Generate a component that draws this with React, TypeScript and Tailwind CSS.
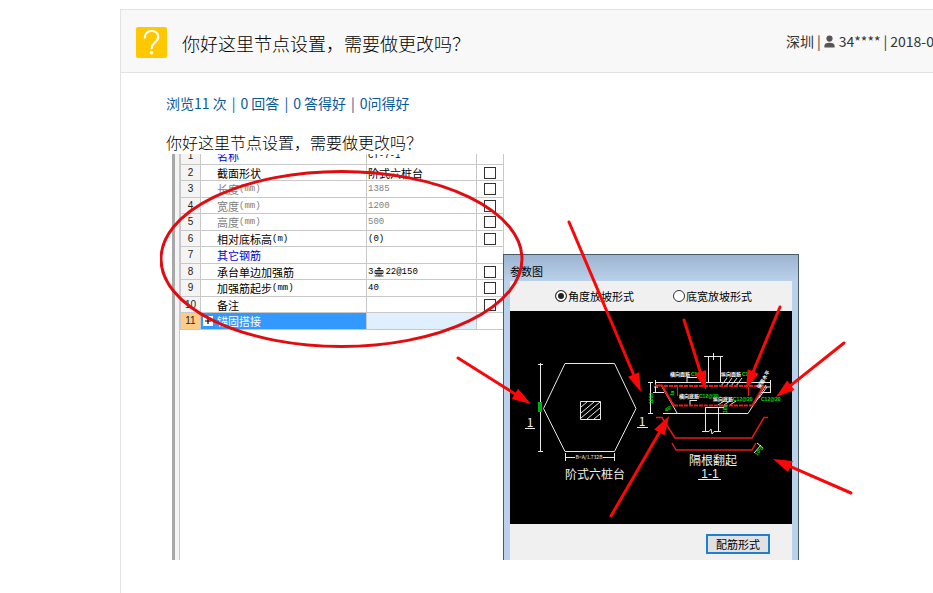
type Row = {
    no: number;
    name: string;
    unit?: string;
    value?: string;
    cjkValue?: boolean;
    rebar?: boolean;
    tone?: "blue" | "gray";
    check?: boolean;
    selected?: boolean;
};

const rows: Row[] = [
    { no: 1, name: "名称", value: "CT-7-1", tone: "blue" },
    { no: 2, name: "截面形状", value: "阶式六桩台", cjkValue: true, check: true },
    { no: 3, name: "长度", unit: "(mm)", value: "1385", tone: "gray", check: true },
    { no: 4, name: "宽度", unit: "(mm)", value: "1200", tone: "gray", check: true },
    { no: 5, name: "高度", unit: "(mm)", value: "500", tone: "gray", check: true },
    { no: 6, name: "相对底标高", unit: "(m)", value: "(0)", check: true },
    { no: 7, name: "其它钢筋", tone: "blue" },
    { no: 8, name: "承台单边加强筋", value: "22@150", rebar: true, check: true },
    { no: 9, name: "加强筋起步", unit: "(mm)", value: "40", check: true },
    { no: 10, name: "备注", check: true },
    { no: 11, name: "锚固搭接", selected: true },
];

const stats = ["浏览11 次", "0 回答", "0 答得好", "0问得好"];

// tail x, tail y, tip x, tip y
const arrows = [
    [569, 222, 641, 392],
    [684, 320, 706, 390],
    [780, 307, 746, 389],
    [844, 343, 776, 397],
    [851, 493, 773, 459],
    [611, 516, 669, 416],
    [458, 358, 531, 404],
];

function QuestionIcon() {
    return (
        <svg viewBox="0 0 31 31" className="mt-[2px] size-[31px] shrink-0" aria-hidden="true">
            <rect width="31" height="31" rx="2" fill="#ffc800" />
            <path
                d="M8.8 10.6C8.8 6.4 11.6 4 15.6 4c4 0 6.6 2.3 6.6 5.8 0 2.8-1.6 4.3-3.5 6-2.2 1.9-3.1 3-3.1 5.4"
                fill="none"
                stroke="#fff"
                strokeWidth="2.2"
                strokeLinecap="round"
            />
            <circle cx="15.5" cy="25.8" r="1.8" fill="#fff" />
        </svg>
    );
}

function UserIcon() {
    return (
        <svg viewBox="0 0 11 13" className="mt-px mr-px h-[13px] w-[11px] shrink-0" fill="#555" aria-hidden="true">
            <circle cx="5.5" cy="3.6" r="3.1" />
            <path d="M0.4 12.6V10.8C0.4 8.8 2.2 7.8 5.5 7.8s5.1 1 5.1 3v1.8z" />
        </svg>
    );
}

function RebarIcon() {
    return (
        <svg viewBox="0 0 10 10" className="mx-px size-[10px]" fill="none" stroke="#000" strokeWidth="0.8" aria-hidden="true">
            <path d="M5 0v9.5M0.5 9h9M3 1.5h4M1 3.5h8v3h-8zM3 3.5v5M7 3.5v5" />
        </svg>
    );
}

function PropertyTable() {
    return (
        <table className="-mt-[7px] w-full table-fixed border-collapse text-[11px] leading-[14px] text-black">
            <colgroup>
                <col className="w-[20px]" />
                <col className="w-[166px]" />
                <col className="w-[110px]" />
                <col className="w-[27px]" />
            </colgroup>
            <tbody>
                {rows.map((row) => (
                    <tr
                        key={row.no}
                        className={`odd:h-[17px] even:h-[16px] ${
                            row.tone === "blue" ? "text-[#0000e0]" : row.tone === "gray" ? "text-[#808080]" : ""
                        }`}
                    >
                        <td
                            className={`border border-[#c8c8c8] p-0 text-center font-['Liberation_Sans'] text-[10px] leading-[14px] text-[#222] ${
                                row.selected ? "bg-[#ffcc88]" : "bg-[#f4f4f4]"
                            }`}
                        >
                            {row.no}
                        </td>
                        <td
                            className={`border border-[#c8c8c8] p-0 whitespace-nowrap ${
                                row.selected ? "bg-[#3399ff] text-white" : ""
                            }`}
                        >
                            <div className="flex h-[14px] items-center">
                                <span className="flex w-[16px] shrink-0 items-center pl-[2px]">
                                    {row.selected && (
                                        <svg viewBox="0 0 10 10" className="size-[10px]" aria-label="展开">
                                            <rect width="10" height="10" fill="#fff" />
                                            <path d="M5 2v6M2 5h6" stroke="#000" strokeWidth="1.2" />
                                        </svg>
                                    )}
                                </span>
                                {row.name}
                                {row.unit && <span className="font-['Liberation_Mono'] text-[9px]">{row.unit}</span>}
                            </div>
                        </td>
                        <td className={`border border-[#c8c8c8] p-0 whitespace-nowrap ${row.selected ? "bg-[#e0effe]" : ""}`}>
                            <div
                                className={`flex h-[14px] items-center pl-px ${
                                    row.cjkValue ? "" : "font-['Liberation_Mono'] text-[9px]"
                                } ${row.tone === "blue" ? "text-black" : ""}`}
                            >
                                {row.rebar && (
                                    <>
                                        3<RebarIcon />
                                    </>
                                )}
                                {row.value}
                            </div>
                        </td>
                        <td className="border border-[#c8c8c8] p-0">
                            {row.check && (
                                <input
                                    type="checkbox"
                                    aria-label={row.name}
                                    className="mx-auto block size-[12px] appearance-none border border-[#333] bg-white"
                                />
                            )}
                        </td>
                    </tr>
                ))}
            </tbody>
        </table>
    );
}

function CadDrawing() {
    return (
        <svg viewBox="510 311 282 213" className="block h-[213px] w-full bg-black font-['Noto_Sans_CJK_SC',sans-serif]">
            {/* plan */}
            <g fill="none" stroke="#e8e8e8">
                <path d="M565 363.5H614.5L636 408.5L614.5 451.5H565L543.5 408.5Z" />
                <path d="M540.5 363V452M538 364.5H543M538 451.5H543" />
                <path d="M580.5 401.5H600.5V419.5H580.5Z" />
                <path d="M581 407L587 402M581 413L594 402M581 418L600 402M587 419L600 408M594 419L600 414" />
                <path d="M525 428.5H535M637 427.5H648" />
                <path d="M565.5 453V461M614.5 453V461M565 457.5H575M603 457.5H614" />
            </g>
            <rect x="538" y="402" width="4" height="10" fill="#00b010" />
            <g fill="#f0f0f0" textAnchor="middle">
                <text x="530" y="427" fontSize="12">1</text>
                <text x="642" y="426" fontSize="12">1</text>
                <text x="589" y="459" fontSize="5">B=A/1.732B</text>
                <text x="595" y="479" fontSize="12">阶式六桩台</text>
                <text x="713" y="465" fontSize="12">隔根翻起</text>
                <text x="710" y="478" fontSize="12" className="font-['Liberation_Sans']">1-1</text>
            </g>
            {/* section */}
            <g fill="none" stroke="#e8e8e8">
                <path d="M704 356.5H723M708.5 357V382M720.5 357V382M713.5 353V360" />
                <path d="M655 382.5H771M655.5 380V392M653 392.5H664M759 392.5H771M770.5 380V392" />
                <path d="M661 385L677 413M663 413.5H748L766 385" />
                <path d="M650.5 382V413M648 382.5H653M648 413.5H653" />
                <path d="M705.5 407V431M718.5 407V431M705 407.5H724M702 431.5H709L711 429L712 434L714 431.5H721" />
                <path d="M687 377V383M687 377.5H697M690 400V406M690 400.5H697" />
                <path d="M721 386L727 378M726 386L732 378M731 386L737 378M736 386L742 378M718 405L724 401M724 405L730 401M730 405L736 401" />
                <path d="M654 387H658M764 387H771M754 404L760 396M759 398L767 387" />
                <path d="M698 479.5H721M754 453L761 445M757 443L763 448" />
            </g>
            <g fill="none" stroke="#e81818">
                <path d="M655 385.5H662L674 406" strokeWidth="2" />
                <path d="M752 406L764 385.5" strokeWidth="2" />
                <path d="M677.5 387V396M748.5 387V396" />
                <path d="M664 386H764M674 405.5H752" strokeWidth="2" strokeDasharray="4 1" />
                <path d="M656 417.5H662L675 438H752L764 417.5H768" strokeWidth="1.5" />
                <path d="M672 443L676 450H752L756 443" strokeWidth="1.5" />
            </g>
            <g fill="#fff" fontSize="5" className="font-bold">
                <text x="670" y="376">横向面筋</text>
                <text x="721" y="376">纵向面筋</text>
                <text x="679" y="398">横向底筋</text>
                <text x="713" y="401">纵向底筋</text>
                <text x="760" y="389" transform="rotate(-60 760 389)">侧面水平</text>
            </g>
            <g fill="#00e010" fontSize="5" className="font-['Liberation_Sans'] font-bold">
                <text x="691" y="376">C12</text>
                <text x="742" y="376">C12</text>
                <text x="699" y="398">C12@20</text>
                <text x="733" y="401">C12@20</text>
                <text x="761" y="401">C12@20</text>
                <text x="757" y="456" transform="rotate(-50 757 456)">10*d</text>
                <text x="727" y="413" transform="rotate(-90 727 413)">100</text>
                <text x="653" y="404" transform="rotate(-90 653 404)">1000</text>
                <text x="674" y="395" transform="rotate(-90 674 395)">la</text>
                <text x="666" y="412" transform="rotate(-30 666 412)">45°</text>
            </g>
        </svg>
    );
}

function ParamDialog() {
    return (
        <div className="mt-[100px] flex w-[296px] shrink-0 flex-col border border-b-0 border-[#4a5a6a] bg-[#b9d1ea] px-[6px] text-black">
            <div className="-mx-[6px] flex h-[26px] shrink-0 items-center bg-linear-to-b from-[#9cb4d0] to-[#b9d1ea] px-[6px] pt-[6px] text-[11px]">
                参数图
            </div>
            <div className="flex h-[30px] shrink-0 items-center gap-[39px] bg-[#f0f0f0] pl-[45px] text-[11px] whitespace-nowrap">
                <label className="flex items-center gap-px">
                    <input
                        type="radio"
                        name="slope"
                        defaultChecked
                        className="size-[12px] appearance-none rounded-full border border-[#333] bg-white checked:bg-[#222] checked:shadow-[inset_0_0_0_2px_#fff]"
                    />
                    角度放坡形式
                </label>
                <label className="flex items-center gap-px">
                    <input
                        type="radio"
                        name="slope"
                        className="size-[12px] appearance-none rounded-full border border-[#333] bg-white"
                    />
                    底宽放坡形式
                </label>
            </div>
            <CadDrawing />
            <div className="flex flex-1 items-start justify-end bg-[#f0f0f0] pt-[10px] pr-[22px]">
                <button className="h-[20px] w-[64px] border-2 border-[#2080d0] bg-[#e1e1e1] text-[11px] leading-[14px]">
                    配筋形式
                </button>
            </div>
        </div>
    );
}

function Arrow({ points }: { points: number[] }) {
    const [x1, y1, x2, y2] = points;
    const angle = (Math.atan2(y2 - y1, x2 - x1) * 180) / Math.PI;
    const length = Math.hypot(x2 - x1, y2 - y1);
    return (
        <g transform={`translate(${x1} ${y1}) rotate(${angle})`}>
            <path d={`M0 0H${length - 16}`} stroke="#f80808" strokeWidth="3" strokeLinecap="round" />
            <path d={`M${length} 0l-19 -6v12z`} fill="#f80808" />
        </g>
    );
}

function Marks() {
    return (
        <svg viewBox="160 154 693 406" className="pointer-events-none absolute inset-0 size-full" fill="none">
            <ellipse cx="341.5" cy="259" rx="180.5" ry="87.5" stroke="#e00c10" strokeWidth="3" />
            {arrows.map((points) => (
                <Arrow key={points[0]} points={points} />
            ))}
        </svg>
    );
}

export default function App() {
    return (
        <div className="min-h-screen overflow-hidden bg-white pt-[9px] pl-[120px] font-['Noto_Sans_CJK_SC',sans-serif] text-[#333]">
            <main className="min-h-[calc(100vh-9px)] border-t border-l border-[#e2e2e2]">
                <header className="flex h-[63px] items-center border-b border-[#e2e2e2] bg-[#f8f8f8] pl-[15px]">
                    <QuestionIcon />
                    <h1 className="min-w-0 flex-1 truncate pt-[4px] pl-[15px] text-[18px] leading-[28px] font-light text-black">
                        你好这里节点设置，需要做更改吗？
                    </h1>
                    <div className="flex w-[147px] shrink-0 items-center gap-[3px] overflow-hidden text-[14px] leading-[20px] whitespace-nowrap">
                        <span>深圳</span>
                        <span>|</span>
                        <UserIcon />
                        <span>34****</span>
                        <span>|</span>
                        <span>2018-0</span>
                    </div>
                </header>

                <section className="pt-[19px] pl-[39px]">
                    <ul className="flex gap-[5px] pl-[6px] text-[14px] leading-[22px] text-[#0a5a9c]">
                        {stats.map((text, index) => (
                            <li key={text} className="flex gap-[5px]">
                                {index > 0 && <span>|</span>}
                                <span>{text}</span>
                            </li>
                        ))}
                    </ul>
                    <p className="mt-[16px] pl-[6px] text-[16px] leading-[24px] font-light text-black">
                        你好这里节点设置，需要做更改吗？
                    </p>
                    <figure className="relative flex h-[406px] w-[693px] overflow-hidden pl-[12px]">
                        <div className="flex w-[331px] shrink-0">
                            <div className="w-[8px] shrink-0 border-r border-l-3 border-r-[#c8c8c8] border-l-[#a8a8a8] bg-[#f4f4f4]" />
                            <div className="min-w-0 flex-1">
                                <PropertyTable />
                            </div>
                        </div>
                        <ParamDialog />
                        <Marks />
                    </figure>
                </section>
            </main>
        </div>
    );
}
